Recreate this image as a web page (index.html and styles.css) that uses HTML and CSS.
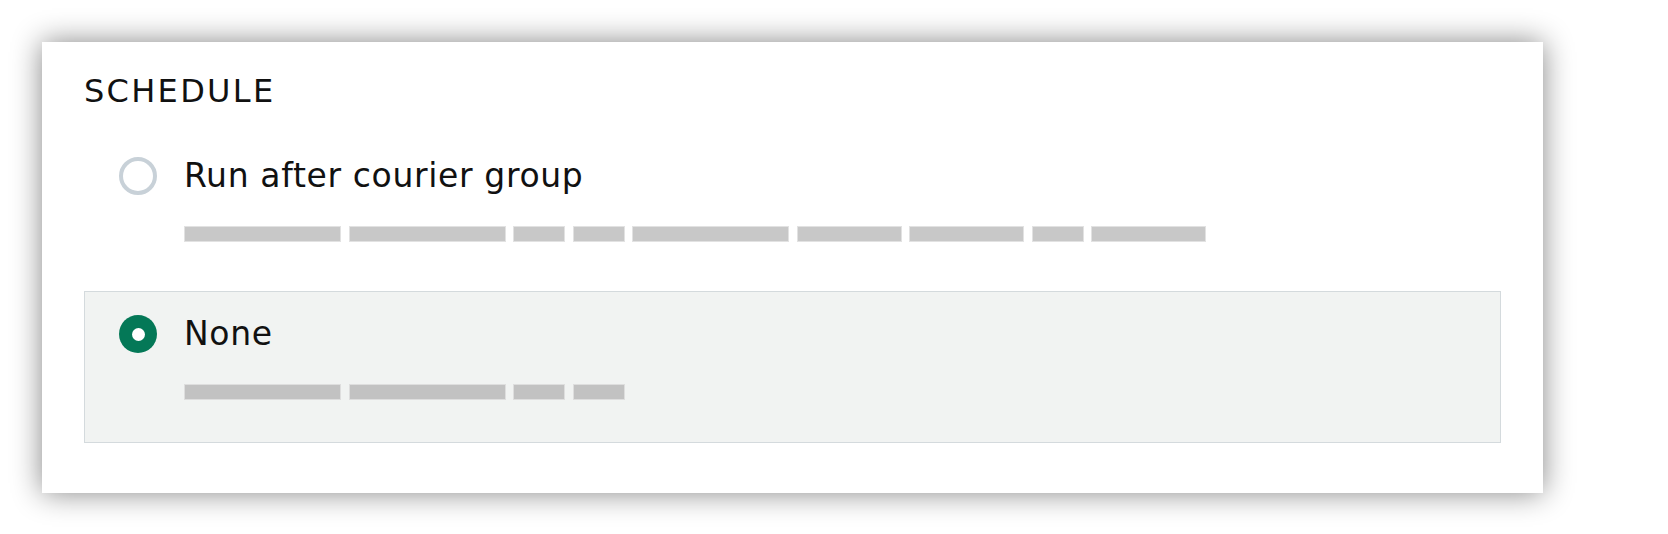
FILE: index.html
```html
<!DOCTYPE html>
<html lang="en">
<head>
<meta charset="utf-8">
<title>Schedule</title>
<link rel="stylesheet" href="styles.css">
</head>
<body>
<section class="card">
  <h2 class="title">SCHEDULE</h2>
  <div class="options">
    <div class="option">
      <div class="row">
        <span class="radio"></span>
        <span class="label">Run after courier group</span>
      </div>
      <div class="desc">
        <span class="bar w156"></span><span class="bar w156"></span><span class="bar w52"></span><span class="bar w52"></span><span class="bar w156"></span><span class="bar w104"></span><span class="bar w115"></span><span class="bar w52"></span><span class="bar w115"></span>
      </div>
    </div>
    <div class="option selected">
      <div class="row">
        <span class="radio checked"></span>
        <span class="label">None</span>
      </div>
      <div class="desc">
        <span class="bar w156"></span><span class="bar w156"></span><span class="bar w52"></span><span class="bar w52"></span>
      </div>
    </div>
  </div>
</section>
</body>
</html>
```

FILE: styles.css
```css
* { box-sizing: border-box; }
html, body { margin: 0; background: #ffffff; }
body {
  padding: 42px;
  font-family: "DejaVu Sans", Inter, sans-serif;
  color: #111111;
}
.card {
  width: 1501px;
  background: #ffffff;
  box-shadow: 0 0 28px rgba(0, 0, 0, 0.48);
  padding: 29px 42px 50px 42px;
}
.title {
  margin: 0;
  font-size: 32px;
  font-weight: 400;
  line-height: 40px;
  letter-spacing: 2.3px;
}
.options {
  margin-top: 22px;
  display: flex;
  flex-direction: column;
  gap: 6px;
}
.option {
  border: 1px solid transparent;
  padding: 23px 34px 42px 34px;
}
.option.selected {
  background: #f1f3f2;
  border-color: #d4dadd;
}
.row {
  display: flex;
  align-items: center;
  gap: 27px;
  height: 38px;
}
.radio {
  width: 38px;
  height: 38px;
  border-radius: 50%;
  border: 4px solid #c8d1d8;
  flex: none;
}
.radio.checked {
  border: none;
  background: #047857;
  display: flex;
  align-items: center;
  justify-content: center;
}
.radio.checked::after {
  content: "";
  width: 13px;
  height: 13px;
  border-radius: 50%;
  background: #ffffff;
}
.label {
  font-size: 33px;
  line-height: 38px;
  letter-spacing: 0.65px;
}
.desc {
  margin-top: 31px;
  margin-left: 65px;
  display: flex;
  gap: 7.5px;
}
.bar {
  height: 16px;
  background: #c8c8c8;
  border: 1px solid #e2e2e2;
}
.selected .bar {
  background: #c2c2c2;
  border-color: #dedede;
}
.w156 { width: 157px; }
.w52 { width: 52px; }
.w104 { width: 105px; }
.w115 { width: 115px; }
```
